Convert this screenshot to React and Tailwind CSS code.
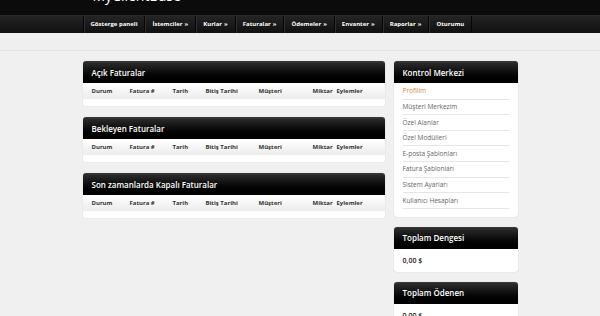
import React from "react";

const navItems = [
  { label: "Gösterge paneli", arrow: false },
  { label: "İstemciler", arrow: true },
  { label: "Kurlar", arrow: true },
  { label: "Faturalar", arrow: true },
  { label: "Ödemeler", arrow: true },
  { label: "Envanter", arrow: true },
  { label: "Raporlar", arrow: true },
  { label: "Oturumu", arrow: false },
];

const cols = ["Durum", "Fatura #", "Tarih", "Bitiş Tarihi", "Müşteri", "Miktar", "Eylemler"];

const links = [
  "Profilim",
  "Müşteri Merkezim",
  "Özel Alanlar",
  "Özel Modülleri",
  "E-posta Şablonları",
  "Fatura Şablonları",
  "Sistem Ayarları",
  "Kullanıcı Hesapları",
];

function PanelHeader({ title }) {
  return (
    <div className="h-[22px] rounded-t-[3px] bg-gradient-to-b from-[#2e2e2e] via-[#0c0c0c] to-[#000] border-t border-[#3a3a3a] flex items-center px-[9px] text-white text-[8px] font-semibold">
      {title}
    </div>
  );
}

function InvoicePanel({ title }) {
  return (
    <div className="rounded-[3px] bg-white shadow-[0_0_1px_rgba(0,0,0,0.25)]">
      <PanelHeader title={title} />
      <div className="h-[16px] bg-gradient-to-b from-white to-[#ececec] grid grid-cols-[38px_43px_33px_53px_54px_24px_1fr] items-center pl-[9px] text-[6px] font-bold text-[#333]">
        {cols.map((c) => (
          <div key={c}>{c}</div>
        ))}
      </div>
      <div className="h-[7px] bg-white rounded-b-[3px]" />
    </div>
  );
}

function SidePanel({ title, children }) {
  return (
    <div className="rounded-[3px] bg-white shadow-[0_0_1px_rgba(0,0,0,0.25)]">
      <PanelHeader title={title} />
      {children}
    </div>
  );
}

export default function App() {
  return (
    <div
      className="w-[600px] h-[316px] overflow-hidden bg-[#f0f0f0]"
      style={{ fontFamily: '"Open Sans", "Liberation Sans", sans-serif' }}
    >
      <div className="h-[15px] bg-[#0b0b0b] overflow-hidden">
        <div className="w-[435px] mx-auto pl-[10px]">
          <div className="text-white text-[14px] leading-[14px] mt-[-11px]">MyClientBase</div>
        </div>
      </div>
      <div className="h-[18px] bg-gradient-to-b from-[#242424] to-[#101010] border-t border-[#2a2a2a]">
        <div className="w-[435px] mx-auto flex h-full border-l border-[#050505]">
          {navItems.map((n) => (
            <div
              key={n.label}
              className="h-full flex items-center px-[7px] text-white text-[6px] font-bold border-r border-[#050505] shadow-[inset_1px_0_0_#2e2e2e]"
            >
              {n.label}
              {n.arrow && <span className="ml-[2px] text-[6px]">»</span>}
            </div>
          ))}
        </div>
      </div>
      <div className="h-[18px] bg-[#efefef] border-b border-[#e1e1e1]" />
      <div className="w-[435px] mx-auto flex gap-[9px] pt-[10px]">
        <div className="w-[302px] flex flex-col gap-[11px]">
          <InvoicePanel title="Açık Faturalar" />
          <InvoicePanel title="Bekleyen Faturalar" />
          <InvoicePanel title="Son zamanlarda Kapalı Faturalar" />
        </div>
        <div className="w-[124px] flex flex-col gap-[10px]">
          <SidePanel title="Kontrol Merkezi">
            <div className="px-[9px] pt-[1px] pb-[8px]">
              {links.map((l, i) => (
                <div
                  key={l}
                  className={`h-[15.6px] flex items-center border-b border-[#e6e6e6] text-[6.5px] ${
                    i === 0 ? "text-[#d08a3a]" : "text-[#666]"
                  }`}
                >
                  {l}
                </div>
              ))}
            </div>
          </SidePanel>
          <SidePanel title="Toplam Dengesi">
            <div className="h-[23px] flex items-center pt-[2px] px-[9px] text-[7px] font-semibold text-[#222]">0,00 $</div>
          </SidePanel>
          <SidePanel title="Toplam Ödenen">
            <div className="h-[23px] flex items-center pt-[2px] px-[9px] text-[7px] font-semibold text-[#222]">0,00 $</div>
          </SidePanel>
        </div>
      </div>
    </div>
  );
}
